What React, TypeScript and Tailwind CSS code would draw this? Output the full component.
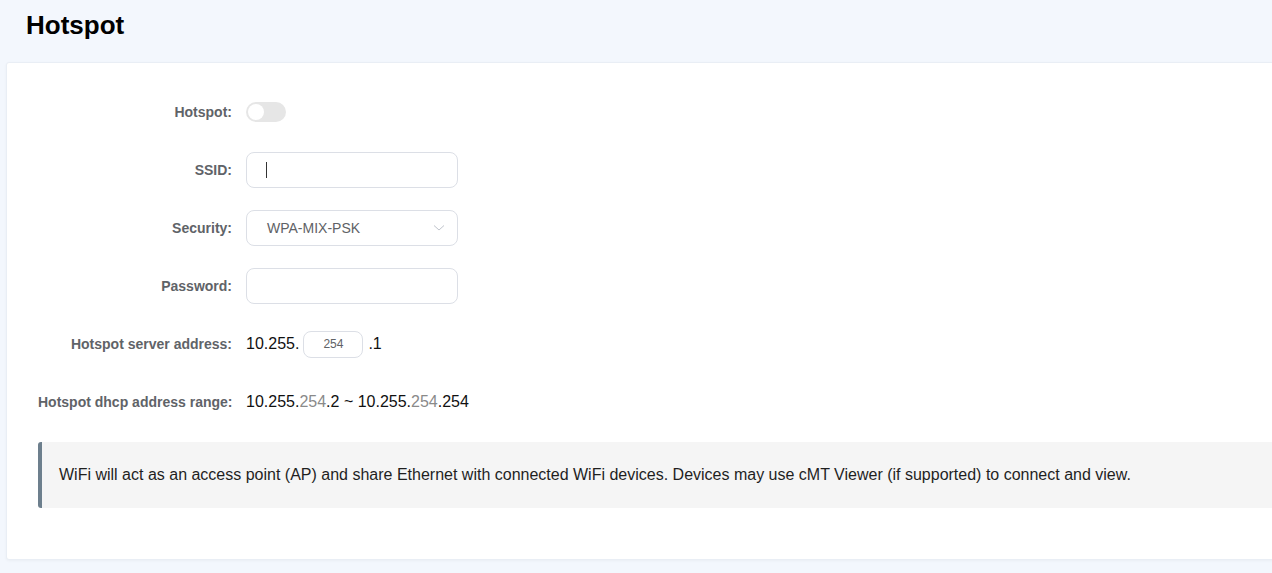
import React from "react";

const font = { fontFamily: '"Liberation Sans", Arial, sans-serif' };

function Row({ label, children }: { label: string; children: React.ReactNode }) {
  return (
    <div className="flex items-center h-[36px] gap-[14px]">
      <div className="w-[194px] shrink-0 text-right whitespace-nowrap text-[14px] font-bold text-[#5f6368]">{label}</div>
      <div className="flex items-center">{children}</div>
    </div>
  );
}

export default function App() {
  return (
    <div style={font} className="w-[1272px] h-[573px] bg-[#f3f7fd] overflow-hidden flex flex-col">
      <div className="h-[62px] shrink-0 pl-[26px] pt-[9px]">
        <h1 className="text-[26px] font-bold text-black leading-[32px]">Hotspot</h1>
      </div>
      <div className="ml-[6px] w-[1280px] h-[498px] bg-white border border-[#e9eef5] rounded-[3px] shadow-[0_1px_3px_rgba(0,0,0,0.04)] pl-[31px] pt-[31px] flex flex-col gap-[22px]">
        <Row label="Hotspot:">
          <div className="w-[40px] h-[20px] rounded-full bg-[#e6e6e6] relative">
            <div className="absolute left-[2px] top-[2px] w-[16px] h-[16px] rounded-full bg-white" />
          </div>
        </Row>
        <Row label="SSID:">
          <div className="w-[212px] h-[36px] rounded-[8px] border border-[#dcdfe6] flex items-center pl-[19px]">
            <span className="w-[1px] h-[16px] bg-[#333]" />
          </div>
        </Row>
        <Row label="Security:">
          <div className="w-[212px] h-[36px] rounded-[8px] border border-[#dcdfe6] flex items-center pl-[20px] pr-[12px] justify-between">
            <span className="text-[14px] text-[#606266]">WPA-MIX-PSK</span>
            <svg width="12" height="8" viewBox="0 0 12 8" fill="none">
              <path d="M1 1.5L6 6L11 1.5" stroke="#c0c4cc" strokeWidth="1" />
            </svg>
          </div>
        </Row>
        <Row label="Password:">
          <div className="w-[212px] h-[36px] rounded-[8px] border border-[#dcdfe6]" />
        </Row>
        <Row label="Hotspot server address:">
          <span className="text-[16px] text-[#111]">10.255.</span>
          <div className="ml-[4px] w-[60px] h-[27px] rounded-[8px] border border-[#dcdfe6] flex items-center justify-center text-[12px] text-[#606266]">254</div>
          <span className="ml-[5px] text-[16px] text-[#111]">.1</span>
        </Row>
        <Row label="Hotspot dhcp address range:">
          <span className="text-[16px] text-[#111]">
            10.255.<span className="text-[#8a8a8a]">254</span>.2 ~ 10.255.<span className="text-[#8a8a8a]">254</span>.254
          </span>
        </Row>
        <div className="h-[66px] bg-[#f5f5f5] border-l-[4px] border-[#6d7f8d] rounded-l-[3px] flex items-center pl-[17px] text-[16px] text-[#1f1f1f]">
          WiFi will act as an access point (AP) and share Ethernet with connected WiFi devices. Devices may use cMT Viewer (if supported) to connect and view.
        </div>
      </div>
    </div>
  );
}
